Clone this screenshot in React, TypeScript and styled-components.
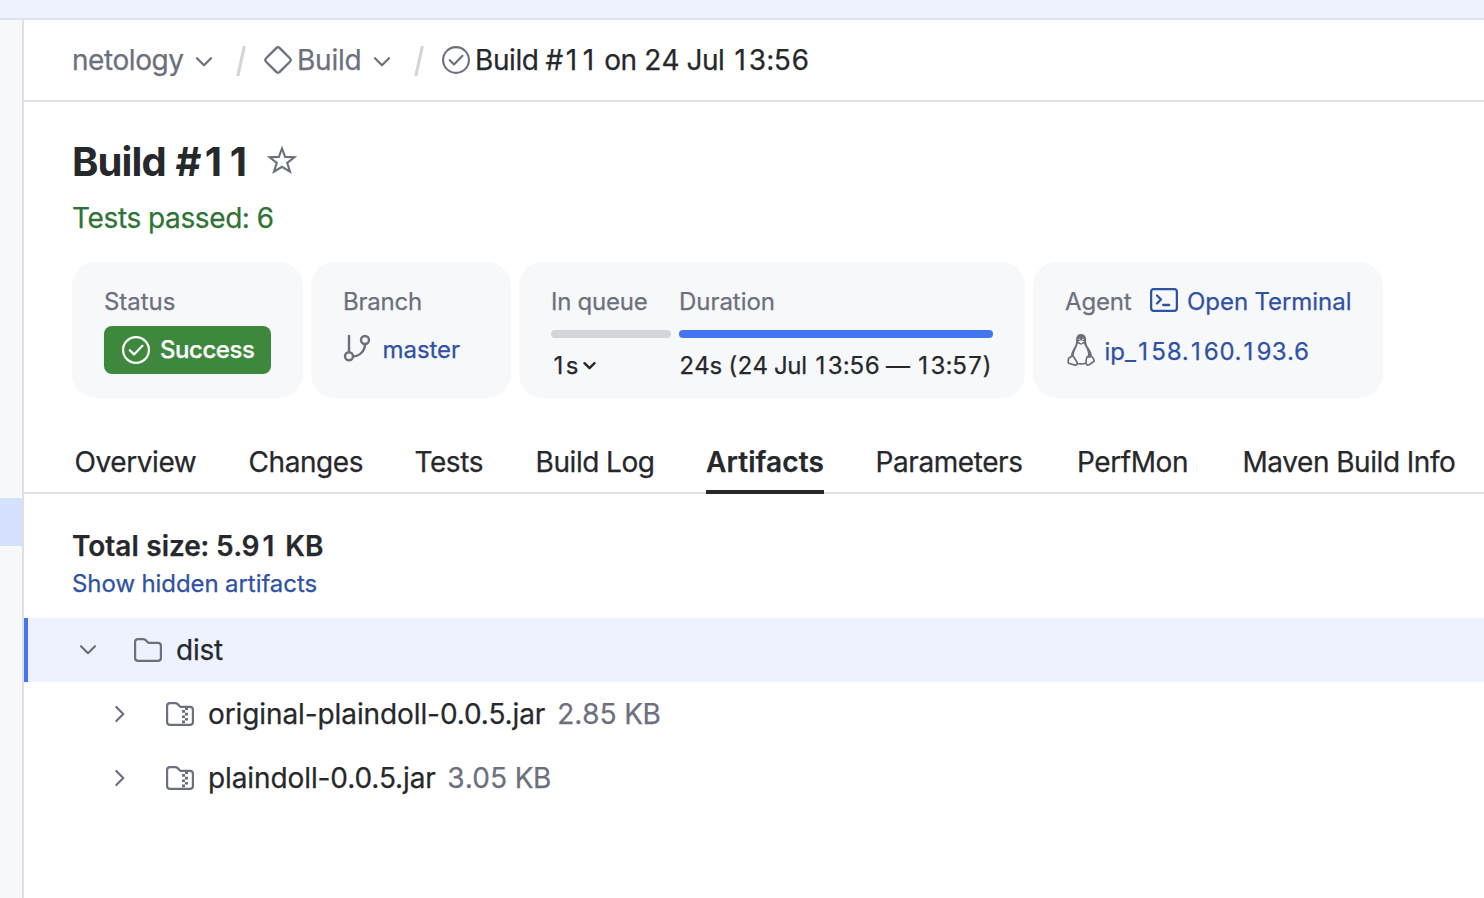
import React from 'react';
import styled, { createGlobalStyle, css } from 'styled-components';

const color = {
  text: '#27282c',
  muted: '#6c707e',
  line: '#dfe0e5',
  link: '#3052a3',
  green: '#2f7334',
  badge: '#3d883c',
  blue: '#4474ee',
  panel: '#f7f8fa',
  tint: '#eef2ff',
};

const GlobalStyle = createGlobalStyle`
  *, *::before, *::after { box-sizing: border-box; }
  body {
    margin: 0;
    background: #fff;
    color: ${color.text};
    font-family: Inter, "Liberation Sans", sans-serif;
    font-variant-numeric: tabular-nums;
    overflow: hidden;
  }
  svg { display: block; flex: none; }
`;

const Page = styled.div`
  display: grid;
  grid-template: 20px 1fr / 24px 1fr;
  width: 1484px;
  height: 898px;
`;

const TopStrip = styled.div`
  grid-column: 1 / -1;
  background: ${color.tint};
  border-bottom: 2px solid #dde1f0;
`;

const Sidebar = styled.aside`
  background: ${color.panel};
  border-right: 2px solid ${color.line};
  padding-top: 478px;
`;

const SidebarSelection = styled.div`
  height: 48px;
  background: #d6e1ff;
`;

const Main = styled.main`
  min-width: 0;
`;

const Text = styled.span<{ $small?: boolean; $color?: string; $weight?: number; $track?: number }>`
  font-size: ${(p) => (p.$small ? 24 : 28)}px;
  line-height: 32px;
  white-space: nowrap;
  color: ${(p) => p.$color ?? color.text};
  font-weight: ${(p) => p.$weight ?? 400};
  letter-spacing: ${(p) => p.$track ?? (p.$small ? -0.05 : -0.42)}px;
  -webkit-text-stroke: 0.25px currentColor;
`;

const FileName = styled(Text)`
  font-variant-numeric: normal;
`;

/* A footless "1" that still takes a full digit cell. */
const One = styled.span`
  padding: 0 0.12em 0 0.1em;
  font-variant-numeric: normal;
`;

const Breadcrumbs = styled.nav`
  display: flex;
  align-items: center;
  height: 82px;
  padding: 0 0 0 48px;
  border-bottom: 2px solid ${color.line};
`;

const Crumb = styled.div<{ $width?: number }>`
  display: flex;
  align-items: center;
  gap: 5px;
  width: ${(p) => (p.$width ? `${p.$width}px` : 'auto')};
`;

const CrumbArrow = styled.span`
  margin: 3px 0 0 5.5px;
`;

const CrumbSlash = styled.span`
  width: 28.5px;
  padding-top: 2px;
`;

const Heading = styled.header`
  padding: 40px 0 0 48px;
`;

const TitleRow = styled.div`
  display: flex;
  align-items: center;
  height: 40px;
`;

const Title = styled.h1`
  width: 195px;
  margin: 0;
  font-size: 40px;
  line-height: 40px;
  font-weight: 700;
  letter-spacing: -0.9px;
  white-space: nowrap;
`;

const Favorite = styled.span`
  margin-bottom: 5px;
`;

const TestsPassed = styled.div`
  display: flex;
  margin-top: 20px;
`;

const Cards = styled.section`
  display: flex;
  gap: 8px;
  padding: 28px 0 0 48px;
`;

const Card = styled.div<{ $width: number }>`
  width: ${(p) => p.$width}px;
  height: 136px;
  padding: 24px 32px 0;
  border-radius: 24px;
  background: ${color.panel};
`;

const CardLine = styled.div<{ $top?: number; $gap?: number }>`
  display: flex;
  align-items: center;
  gap: ${(p) => p.$gap ?? 0}px;
  height: 32px;
  margin-top: ${(p) => p.$top ?? 0}px;
`;

const CardIcon = styled.span<{ $left?: number }>`
  margin: 0 0 4px ${(p) => p.$left ?? 0}px;
`;

const StatusBadge = styled.div`
  display: flex;
  align-items: center;
  gap: 10px;
  width: 167px;
  height: 48px;
  margin-top: 8px;
  padding-left: 18px;
  border-radius: 8px;
  background: ${color.badge};
`;

const Timing = styled.div`
  display: grid;
  grid-template-columns: 120px 314px;
  column-gap: 8px;
`;

const TimingBar = styled.div<{ $color: string }>`
  height: 8px;
  margin-top: 12px;
  border-radius: 4px;
  background: ${(p) => p.$color};
`;

const Tabs = styled.nav`
  display: flex;
  height: 66px;
  margin-top: 30px;
  padding-left: 50.5px;
  border-bottom: 2px solid ${color.line};
`;

const Tab = styled.div<{ $active?: boolean; $width: number; $gap: number }>`
  flex: none;
  width: ${(p) => p.$width}px;
  height: 66px;
  margin-right: ${(p) => p.$gap}px;
  padding-top: 18px;
  ${(p) => p.$active && css`border-bottom: 4px solid #27282c;`}
`;

const Summary = styled.div`
  display: flex;
  flex-direction: column;
  height: 124px;
  padding: 36px 0 0 48px;
`;

const SummaryLink = styled.a`
  display: flex;
  margin-top: 6px;
`;

const TreeRow = styled.div<{ $selected?: boolean; $indent: number }>`
  display: flex;
  align-items: center;
  height: 64px;
  padding-left: ${(p) => p.$indent}px;
  ${(p) => p.$selected && css`
    background: ${color.tint};
    box-shadow: inset 4px 0 0 ${color.blue};
  `}
`;

const TreeToggle = styled.span`
  width: 56px;
`;

const TreeIcon = styled.span`
  width: 42px;
`;

const FileSize = styled.span`
  display: flex;
  margin-left: 11.5px;
`;

const Digits = ({ children }: { children: string }) => (
  <>
    {children.split(/(1)/).map((part, i) => (part === '1' ? <One key={i}>1</One> : part))}
  </>
);

const Chevron = () => (
  <svg width="20" height="20" viewBox="0 0 20 20" fill="none" stroke={color.muted} strokeWidth="2.2" strokeLinecap="round" strokeLinejoin="round">
    <path d="M3 6.2 10 13.2 17 6.2" />
  </svg>
);

const QueueChevron = () => (
  <svg width="14" height="10" viewBox="0 0 14 10" fill="none" stroke={color.text} strokeWidth="2.4" strokeLinecap="round" strokeLinejoin="round">
    <path d="M1.500 2.200 6.500 7.200 11.500 2.200" />
  </svg>
);

const ChevronRight = () => (
  <svg width="20" height="20" viewBox="0 0 20 20" fill="none" stroke={color.muted} strokeWidth="2.2" strokeLinecap="round" strokeLinejoin="round">
    <path d="M6.300 3 13.300 10 6.300 17" />
  </svg>
);

const Slash = () => (
  <svg width="12" height="30" viewBox="0 0 12 30">
    <path d="M6.8 0H10L3.4 30H.2z" fill="#d3d5db" />
  </svg>
);

const Diamond = () => (
  <svg width="28" height="28" viewBox="0 0 28 28" fill="none" stroke={color.muted} strokeWidth="2.3">
    <path d="M12.500 1.900a2 2 0 0 1 3 0l10.600 10.600a2 2 0 0 1 0 3l-10.600 10.600a2 2 0 0 1-3 0L1.900 15.500a2 2 0 0 1 0-3z" />
  </svg>
);

const CheckCircle = ({ stroke = color.muted, width = 2.1 }) => (
  <svg width="28" height="28" viewBox="0 0 28 28" fill="none" stroke={stroke} strokeWidth={width} strokeLinecap="round" strokeLinejoin="round">
    <circle cx="14" cy="14" r="12.9" />
    <path d="M7.8 14.2 12 18.4 20.5 9.8" />
  </svg>
);

const Star = () => (
  <svg width="30" height="30" viewBox="0 0 30 30" fill="none" stroke={color.muted} strokeWidth="2.1" strokeLinejoin="miter">
    <path d="M15 3.500 18.100 11.900 27.300 12.200 20.200 17.900 23 26.600 15 21.800 7 26.600 9.800 17.900 2.700 12.200 11.900 11.900z" />
  </svg>
);

const BranchIcon = () => (
  <svg width="28" height="28" viewBox="0 0 28 28" fill="none" stroke={color.muted} strokeWidth="2.4" strokeLinecap="round">
    <circle cx="6" cy="22.300" r="4" />
    <circle cx="22" cy="6" r="4" />
    <path d="M6 2V18M10 22.300C16.500 22.300 22 17 22 10" />
  </svg>
);

const TerminalIcon = () => (
  <svg width="28" height="24" viewBox="0 0 28 24" fill="none" stroke={color.link} strokeWidth="2.3" strokeLinecap="round" strokeLinejoin="round">
    <rect x="1.1" y="1.1" width="25.8" height="21.8" rx="2.6" />
    <path d="M7 7.5 11 11.5 7 15.5M13.2 17H19.2" />
  </svg>
);

const Penguin = () => (
  <svg width="28" height="32" viewBox="0 0 28 32">
    <path d="M9.1 5.8C9.100 2 10.800.1 14 .1s5.100 2.100 5.100 5.500c0 4 .5 5.300 2.500 8.200 2.300 3.300 3.600 6 3.200 9.200L21 22.500c.3-4-1-7.300-2.600-9.900-.8-1.300-1.200-2.200-1.400-3.200L14 10.800l-3.200-1.300c-.4 2.300-1.100 3.500-2.100 5.500-1.400 2.800-2.100 5-1.900 8l-2.800.8c-.4-4 1.200-7 3.100-10.200 1.600-2.600 2-4 2-7.800z" fill={color.muted} />
    <path d="M11 7.200 14 6.300l3.300.9L14.200 9.600z" fill={color.panel} />
    <circle cx="12.300" cy="5.200" r=".6" fill={color.panel} />
    <circle cx="15.900" cy="5.200" r=".8" fill={color.panel} />
    <g fill={color.panel} stroke={color.muted} strokeWidth="1.700" strokeLinejoin="round">
      <path d="M9 29.300q5 1.300 10 0" fill="none" />
      <path d="M1.600 24.200 4.800 22.200q1.400-.6 2.200 1l3 5c.7 1.500-.4 3-2 2.900L1.600 29.200Q.9 28.700 1.300 27z" />
      <path d="M26 24 24 21.800q-1 2-3.800.7-1.400 3-1.200 6.500c.2 2 1.700 2.500 3.200 1.700l4.600-3.200q.8-.8.2-1.600z" />
    </g>
  </svg>
);

const Folder = ({ archive = false }) => (
  <svg width="28" height="24" viewBox="0 0 28 24">
    <path d="M1.100 20V4Q1.100 1.100 4 1.100H9.300Q10.500 1.100 11.400 1.900L14.300 4.800H24Q26.900 4.800 26.900 7.800V20Q26.900 22.900 24 22.900H4Q1.100 22.900 1.100 20Z" fill="none" stroke={color.muted} strokeWidth="2.200" strokeLinejoin="round" />
    {archive && (
      <path d="M19 5.500h3v2.500h-3zM16 8h3v2.700h-3zM19 10.700h3v2.700h-3zM16 13.400h3v2.600h-3zM19 16h3v2.600h-3zM16 18.600h3v2.600h-3z" fill={color.muted} />
    )}
  </svg>
);

const tabs = [
  { label: 'Overview', width: 121, gap: 53 },
  { label: 'Changes', width: 113, gap: 53 },
  { label: 'Tests', width: 68, gap: 53 },
  { label: 'Build Log', width: 121, gap: 49.5 },
  { label: 'Artifacts', width: 118, gap: 51.5, active: true },
  { label: 'Parameters', width: 147, gap: 54.5 },
  { label: 'PerfMon', width: 111, gap: 54.5 },
  { label: 'Maven Build Info', width: 214, gap: 0 },
];

const files = [
  { name: 'original-plaindoll-0.0.5.jar', size: '2.85 KB' },
  { name: 'plaindoll-0.0.5.jar', size: '3.05 KB' },
];

export default function App() {
  return (
    <Page>
      <GlobalStyle />
      <TopStrip />
      <Sidebar>
        <SidebarSelection />
      </Sidebar>
      <Main>
        <Breadcrumbs>
          <Crumb $width={163.5}>
            <Text $color={color.muted}>netology</Text>
            <CrumbArrow><Chevron /></CrumbArrow>
          </Crumb>
          <CrumbSlash><Slash /></CrumbSlash>
          <Crumb $width={149.5}>
            <Diamond />
            <Text $color={color.muted} $track={-0.25}>Build</Text>
            <CrumbArrow><Chevron /></CrumbArrow>
          </Crumb>
          <CrumbSlash><Slash /></CrumbSlash>
          <Crumb>
            <CheckCircle />
            <Text><Digits>Build #11 on 24 Jul 13:56</Digits></Text>
          </Crumb>
        </Breadcrumbs>

        <Heading>
          <TitleRow>
            <Title><Digits>Build #11</Digits></Title>
            <Favorite><Star /></Favorite>
          </TitleRow>
          <TestsPassed>
            <Text $color={color.green} $track={-0.36}>Tests passed: 6</Text>
          </TestsPassed>
        </Heading>

        <Cards>
          <Card $width={231}>
            <CardLine><Text $small $color={color.muted}>Status</Text></CardLine>
            <StatusBadge>
              <CheckCircle stroke="#fff" width={2.2} />
              <Text $small $color="#fff" $weight={500} $track={-0.45}>Success</Text>
            </StatusBadge>
          </Card>
          <Card $width={200}>
            <CardLine><Text $small $color={color.muted} $track={-0.2}>Branch</Text></CardLine>
            <CardLine $top={16} $gap={11.5}>
              <CardIcon><BranchIcon /></CardIcon>
              <Text $small $color={color.link}>master</Text>
            </CardLine>
          </Card>
          <Card $width={506}>
            <Timing>
              <CardLine><Text $small $color={color.muted} $track={-0.2}>In queue</Text></CardLine>
              <CardLine><Text $small $color={color.muted}>Duration</Text></CardLine>
              <TimingBar $color="#d3d5db" />
              <TimingBar $color={color.blue} />
              <CardLine $top={12} $gap={5}>
                <Text $small $track={-0.3}><Digits>1s</Digits></Text>
                <QueueChevron />
              </CardLine>
              <CardLine $top={12}><Text $small $track={-0.28}><Digits>24s (24 Jul 13:56 — 13:57)</Digits></Text></CardLine>
            </Timing>
          </Card>
          <Card $width={350}>
            <CardLine $gap={9}>
              <Text $small $color={color.muted} $track={-0.15}>Agent</Text>
              <CardIcon $left={9.5}><TerminalIcon /></CardIcon>
              <Text $small $color={color.link}>Open Terminal</Text>
            </CardLine>
            <CardLine $top={18} $gap={10}>
              <CardIcon $left={1.5}><Penguin /></CardIcon>
              <Text $small $color={color.link} $track={0}><Digits>ip_158.160.193.6</Digits></Text>
            </CardLine>
          </Card>
        </Cards>

        <Tabs>
          {tabs.map((tab) => (
            <Tab key={tab.label} $active={tab.active} $width={tab.width} $gap={tab.gap}>
              <Text $weight={tab.active ? 600 : 400} $track={tab.active ? 0.1 : undefined}>{tab.label}</Text>
            </Tab>
          ))}
        </Tabs>

        <Summary>
          <Text $weight={600} $track={0}><Digits>Total size: 5.91 KB</Digits></Text>
          <SummaryLink><Text $small $color={color.link}>Show hidden artifacts</Text></SummaryLink>
        </Summary>

        <TreeRow $selected $indent={54}>
          <TreeToggle><Chevron /></TreeToggle>
          <TreeIcon><Folder /></TreeIcon>
          <Text $track={-0.2}>dist</Text>
        </TreeRow>
        {files.map((file) => (
          <TreeRow key={file.name} $indent={86}>
            <TreeToggle><ChevronRight /></TreeToggle>
            <TreeIcon><Folder archive /></TreeIcon>
            <FileName $track={-0.1}>{file.name}</FileName>
            <FileSize><Text $color={color.muted}>{file.size}</Text></FileSize>
          </TreeRow>
        ))}
      </Main>
    </Page>
  );
}
